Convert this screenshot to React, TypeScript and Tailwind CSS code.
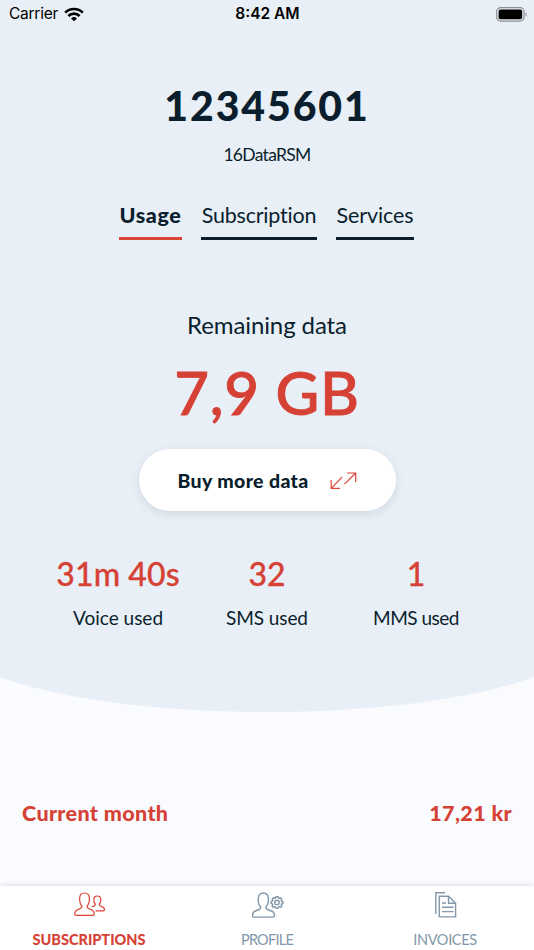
import type { ReactNode } from "react";

type Tab = {
  label: string;
  className: string;
};

type Stat = {
  value: string;
  label: string;
  valueClass: string;
  labelClass: string;
};

const TABS: Tab[] = [
  { label: "Usage", className: "w-[63px] border-[#db4437] font-black tracking-[0.6px]" },
  { label: "Subscription", className: "w-[116px] border-[#0a1e2d] tracking-[-0.2px]" },
  { label: "Services", className: "w-[78px] border-[#0a1e2d] tracking-[-0.1px]" },
];

const STATS: Stat[] = [
  { value: "31m 40s", label: "Voice used", valueClass: "tracking-[0.1px]", labelClass: "" },
  { value: "32", label: "SMS used", valueClass: "", labelClass: "tracking-[-0.1px]" },
  { value: "1", label: "MMS used", valueClass: "", labelClass: "tracking-[-0.5px]" },
];

const WifiIcon = () => (
  <svg width="20" height="15" viewBox="0 0 20 15" fill="none" stroke="#000" strokeWidth="2.7">
    <path d="M1.2 5.6a12.6 12.6 0 0 1 17.6 0" />
    <path d="M4.4 9a8 8 0 0 1 11.2 0" />
    <path d="M10 14.3 7 11.4a4.3 4.3 0 0 1 6 0z" fill="#000" stroke="none" />
  </svg>
);

const BatteryIcon = () => (
  <svg width="32" height="15" viewBox="0 0 32 15">
    <rect x="0.7" y="0.7" width="27.4" height="13.4" rx="4" fill="none" stroke="#8b8f93" strokeWidth="1.2" />
    <rect x="2.6" y="2.6" width="23.6" height="9.6" rx="1.8" fill="#000" />
    <path d="M29.6 5.2c1.5.5 1.5 3.9 0 4.4z" fill="#8b8f93" />
  </svg>
);

const ArrowsIcon = () => (
  <svg width="28" height="18" viewBox="0 0 28 18" fill="none" stroke="#db4437" strokeWidth="1.2">
    <path d="M1.2 8v8.400H10M1.200 16.400 12 5.200" />
    <path d="M17 1H25.700V10M25.700 1 14.500 12.200" />
  </svg>
);

const PeopleIcon = () => (
  <svg width="32" height="24" viewBox="0 0 32 24" fill="none" stroke="#db4437" strokeWidth="1.2" strokeLinejoin="round">
    <path d="M8 14.200C6.200 12.500 5.600 9.500 5.600 6.500 5.600 3 7.500 1 10.500 1s4.900 2 4.900 5.500c0 3-.6 6-2.400 7.700 0 1.600.6 2.200 2.300 2.700 3.300 1 4.900 1.900 4.900 5 0 .9-.6 1.400-1.500 1.400H2.200c-.9 0-1.500-.5-1.500-1.400 0-3.100 1.700-4 5-5 1.700-.5 2.300-1.100 2.300-2.700Z" />
    <path d="M17.800 14.800c2.200-.7 3.500-1 3.500-2.600-1.100-1-1.500-2.700-1.500-4.500 0-2.300 1.500-3.700 3.500-3.700s3.500 1.400 3.500 3.700c0 1.800-.4 3.500-1.500 4.500 0 1.300.6 1.700 2 2.100 2.200.6 3.200 1.400 3.200 3.500 0 .7-.4 1-1.200 1h-7.800" />
  </svg>
);

const ProfileIcon = () => (
  <svg width="32" height="26" viewBox="0 0 32 26" fill="none" stroke="#8298aa" strokeWidth="1.4" strokeLinejoin="round">
    <path d="M8.700 14.900C6.900 13.200 6.200 10.300 6.200 7.200 6.200 3.200 8.100 1 11.300 1s5.100 2.200 5.100 6.200c0 3.100-.7 6-2.500 7.700 0 1.700.7 2.400 2.900 3.100 3.800 1.200 5.700 2 5.700 5.400 0 1.100-.6 1.700-1.700 1.700H2.200c-1.100 0-1.700-.6-1.700-1.700 0-3.400 1.600-4.200 5.300-5.400 2.200-.7 2.900-1.400 2.900-3.100Z" />
    <circle cx="25" cy="10.400" r="2.200" />
    <path d="M23.700 5.900 24 4.700h2l.3 1.200 1.100.5 1.100-.7 1.400 1.500-.7 1 .5 1.200 1.200.1v2l-1.200.3-.5 1.100.7 1.100-1.400 1.400-1.100-.7-1.100.5-.3 1.200h-2l-.3-1.200-1.100-.5-1.100.7-1.400-1.400.7-1.100-.5-1.100-1.200-.3v-2l1.200-.1.5-1.200-.7-1 1.400-1.500 1.100.7z" />
  </svg>
);

const InvoiceIcon = () => (
  <svg width="22" height="26" viewBox="0 0 22 26" fill="none" stroke="#8298aa" strokeWidth="1.4">
    <path d="M.8 22V.8H10" />
    <path d="M4.300 4.200h9.200l7.100 7.100v13.600H4.300z" />
    <path d="M13.500 4.200v7.100h7.100M7 11h4M7 15.300h11.500M7 19.600h11.500" />
  </svg>
);

type NavItemProps = {
  label: string;
  className: string;
  children: ReactNode;
};

const NavItem = ({ label, className, children }: NavItemProps) => (
  <button className="flex flex-1 flex-col items-center">
    <span className="flex h-[44px] items-start justify-center pt-[6px] pl-px">{children}</span>
    <span className={`whitespace-nowrap text-[14.5px] leading-5 ${className}`}>{label}</span>
  </button>
);

export default function App() {
  return (
    <div className="flex h-[950px] w-[534px] flex-col overflow-hidden bg-[#fafbfe] font-['Lato',sans-serif] text-[#0a1e2d]">
      <div className="flex h-[677px] shrink-0 flex-col items-center bg-[#e8eff6]">
        <div className="grid h-7 w-full grid-cols-3 items-center pr-[6px] pl-[9px] font-['Inter',sans-serif] text-black">
          <div className="flex items-center gap-[6px] text-[15.5px] tracking-[-0.25px]">
            Carrier
            <WifiIcon />
          </div>
          <div className="pr-[2px] text-center text-[15.5px] font-semibold">8:42 AM</div>
          <div className="flex justify-end">
            <BatteryIcon />
          </div>
        </div>

        <h1 className="mt-[53px] h-[50px] text-[41px] leading-[50px] font-black tracking-[1.9px]">12345601</h1>
        <p className="mt-[12px] h-6 text-[17.5px] leading-6 tracking-[-0.7px]">16DataRSM</p>

        <div className="mt-[33px] flex gap-[19px] pr-px">
          {TABS.map((tab) => (
            <button
              key={tab.label}
              className={`flex h-[40px] justify-center border-b-[3px] text-[21.5px] leading-[30px] whitespace-nowrap ${tab.className}`}
            >
              {tab.label}
            </button>
          ))}
        </div>

        <p className="mt-[70px] h-[30px] text-[24px] leading-[30px] tracking-[-0.1px]">Remaining data</p>
        <p className="mt-[17px] h-[70px] text-[60px] leading-[70px] font-medium tracking-[0.7px] text-[#d64135] [-webkit-text-stroke:0.9px_#d64135]">
          7,9 GB
        </p>

        <button className="mt-[22px] flex h-[62px] w-[257px] shrink-0 items-center rounded-full bg-white pt-[2px] pl-[39px] shadow-[0_3px_10px_rgba(10,30,45,0.1)]">
          <span className="w-[152px] text-left text-[19.5px] font-black tracking-[0.35px] whitespace-nowrap">
            Buy more data
          </span>
          <ArrowsIcon />
        </button>

        <div className="mt-[43px] flex w-[447px]">
          {STATS.map((stat) => (
            <div key={stat.label} className="flex flex-1 flex-col items-center whitespace-nowrap">
              <span
                className={`h-10 text-[32px] leading-10 font-medium text-[#d64135] [-webkit-text-stroke:0.3px_#d64135] ${stat.valueClass}`}
              >
                {stat.value}
              </span>
              <span className={`mt-[9px] text-[19px] leading-[30px] ${stat.labelClass}`}>{stat.label}</span>
            </div>
          ))}
        </div>
      </div>

      <svg width="534" height="36" viewBox="0 0 534 36" className="shrink-0">
        <path d="M0 0A320 78 0 0 0 534 0Z" fill="#e8eff6" />
      </svg>

      <div className="mt-[85px] flex h-[30px] shrink-0 items-center justify-between px-[22px] text-[21.5px] font-black tracking-[0.35px] text-[#d64135]">
        <span>Current month</span>
        <span>17,21 kr</span>
      </div>

      <nav className="mt-auto flex h-[64px] shrink-0 bg-white shadow-[0_-1px_5px_rgba(10,30,45,0.12)]">
        <NavItem label="SUBSCRIPTIONS" className="font-black text-[#d64135]">
          <PeopleIcon />
        </NavItem>
        <NavItem label="PROFILE" className="tracking-[-0.75px] text-[#8298aa]">
          <ProfileIcon />
        </NavItem>
        <NavItem label="INVOICES" className="tracking-[-0.35px] text-[#8298aa]">
          <InvoiceIcon />
        </NavItem>
      </nav>
    </div>
  );
}
